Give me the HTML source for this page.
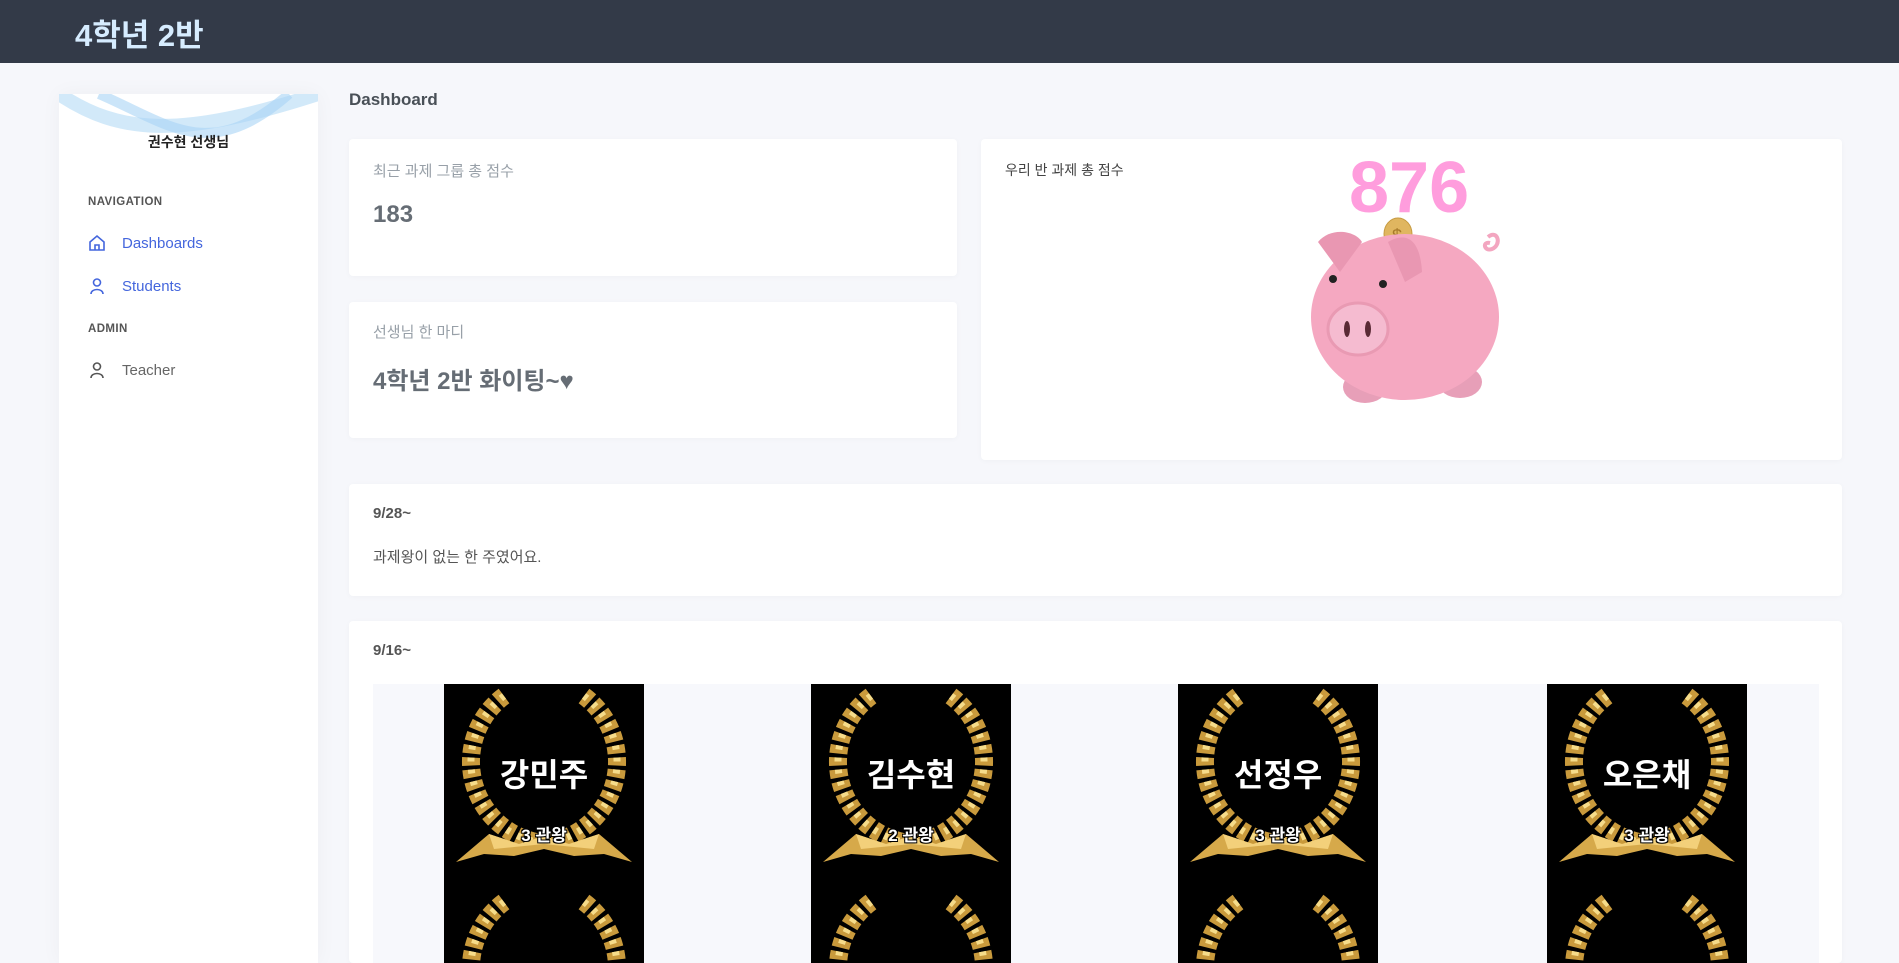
<!DOCTYPE html>
<html style="width:1899px;height:963px;overflow:hidden"><head><meta charset="utf-8">
<style>
*{box-sizing:border-box;margin:0;padding:0}
body{width:1899px;height:963px;overflow:hidden;background:#f6f7fb;font-family:"Liberation Sans","Noto Sans CJK KR",sans-serif;color:#495057;position:relative}
.hdr{position:absolute;left:0;top:0;width:1899px;height:63px;background:#333a48}
.hdr h1{position:absolute;left:75px;top:10px;font-size:31px;font-weight:bold;color:#d6ecff}
.side{position:absolute;left:59px;top:94px;width:259px;height:869px;background:#fff;box-shadow:0 0 20px rgba(0,0,0,.04)}
.wave{position:absolute;left:0;top:0;width:259px;height:50px}
.pname{position:absolute;left:0;width:259px;top:38px;text-align:center;font-size:14px;color:#222;font-weight:bold}
.sec{position:absolute;left:29px;font-size:11.5px;font-weight:bold;color:#555;letter-spacing:.4px}
.item{position:absolute;left:29px;font-size:15px;display:flex;align-items:center}
.item svg{margin-right:16px}
.title{position:absolute;left:349px;top:90px;font-size:17px;font-weight:bold;color:#495057}
.card{position:absolute;background:#fff;border-radius:4px;box-shadow:0 1px 6px rgba(0,0,0,.03);overflow:hidden}
.lbl{font-size:15px;color:#98a0a8}
.big{font-size:24px;font-weight:bold;color:#666d75}
.tile{position:absolute;width:200px;background:#000;top:684px;height:279px;overflow:hidden}
.w{position:absolute;left:0;width:200px;height:206px}
.w .n{position:absolute;left:0;width:200px;text-align:center;top:66px;font-size:32px;font-weight:bold;color:#fff}
.w .c{position:absolute;left:0;width:200px;text-align:center;top:137px;font-size:17px;font-weight:bold;color:#fff;text-shadow:-1px -1px 0 #000,1px 1px 0 #000,1px -1px 0 #000,-1px 1px 0 #000}
</style></head><body>
<div class="hdr"><h1>4학년 2반</h1></div>

<div class="side">
<svg class="wave" viewBox="0 0 259 50"><path d="M0 0 C60 40 120 45 259 0" fill="none" stroke="#bfe0f7" stroke-width="14" opacity=".7"/><path d="M40 0 C110 30 150 70 230 0" fill="none" stroke="#a9d3f5" stroke-width="10" opacity=".6"/></svg>
<div class="pname">권수현 선생님</div>
<div class="sec" style="top:102px">NAVIGATION</div>
<div class="item" style="top:140px;color:#4466dd"><svg width="18" height="18" viewBox="0 0 18 18" fill="none" stroke="#4466dd" stroke-width="1.6"><path d="M2 8 L9 2 L16 8 V16 H2Z"/><path d="M7 16 V11 H11 V16"/></svg>Dashboards</div>
<div class="item" style="top:183px;color:#4466dd"><svg width="18" height="18" viewBox="0 0 18 18" fill="none" stroke="#4466dd" stroke-width="1.6"><circle cx="9" cy="5.5" r="3.5"/><path d="M3 17 C3 11 15 11 15 17"/></svg>Students</div>
<div class="sec" style="top:229px">ADMIN</div>
<div class="item" style="top:267px;color:#666"><svg width="18" height="18" viewBox="0 0 18 18" fill="none" stroke="#555" stroke-width="1.6"><circle cx="9" cy="5.5" r="3.5"/><path d="M3 17 C3 11 15 11 15 17"/></svg>Teacher</div>
</div>

<div class="title">Dashboard</div>

<div class="card" style="left:349px;top:139px;width:608px;height:137px">
<div class="lbl" style="position:absolute;left:24px;top:21px">최근 과제 그룹 총 점수</div>
<div class="big" style="position:absolute;left:24px;top:62px">183</div></div>

<div class="card" style="left:349px;top:302px;width:608px;height:136px">
<div class="lbl" style="position:absolute;left:24px;top:19px">선생님 한 마디</div>
<div class="big" style="position:absolute;left:24px;top:59px">4학년 2반 화이팅~♥</div></div>

<div class="card" style="left:981px;top:139px;width:861px;height:321px">
<div style="position:absolute;left:24px;top:21px;font-size:14px;color:#444">우리 반 과제 총 점수</div>
<svg style="position:absolute;left:329px;top:73px" width="201" height="197" viewBox="0 0 201 197">
<ellipse cx="88" cy="22" rx="14" ry="16" fill="#e0b660" stroke="#c69a40"/>
<text x="82" y="30" font-size="18" fill="#a77a2a" font-family="Liberation Sans">$</text>
<path d="M178 25 c10 -8 14 8 4 12 c-8 3 -10 -8 -2 -6" fill="none" stroke="#f3a6c0" stroke-width="4"/>
<ellipse cx="55" cy="175" rx="22" ry="16" fill="#e79fb8"/>
<ellipse cx="150" cy="170" rx="22" ry="16" fill="#e79fb8"/>
<ellipse cx="95" cy="105" rx="94" ry="83" fill="#f5a8c1"/>
<path d="M8 30 C20 15 45 18 52 30 L30 60Z" fill="#e997b2"/>
<path d="M78 30 C95 20 110 25 112 60 L95 70Z" fill="#e997b2"/>
<circle cx="23" cy="67" r="4" fill="#222"/><circle cx="73" cy="72" r="4" fill="#222"/>
<ellipse cx="48" cy="117" rx="30" ry="26" fill="#f5bbd0" stroke="#e99ab3" stroke-width="3"/>
<ellipse cx="37" cy="117" rx="3" ry="8" fill="#5a2a35"/><ellipse cx="58" cy="117" rx="3" ry="8" fill="#5a2a35"/>
</svg>
<div style="position:absolute;left:368px;top:8px;font-size:72px;font-weight:bold;color:#ff9ddd;font-family:'Liberation Sans',sans-serif">876</div>
</div>

<div class="card" style="left:349px;top:484px;width:1493px;height:112px">
<div style="position:absolute;left:24px;top:21px;font-size:15px;font-weight:bold;color:#555">9/28~</div>
<div style="position:absolute;left:24px;top:62px;font-size:15px;color:#555">과제왕이 없는 한 주였어요.</div></div>

<div class="card" style="left:349px;top:621px;width:1493px;height:342px">
<div style="position:absolute;left:24px;top:21px;font-size:15px;font-weight:bold;color:#555">9/16~</div>
<div style="position:absolute;left:24px;top:63px;width:1446px;height:279px;background:#f7f8fc"></div></div>

<svg width="0" height="0" style="position:absolute"><defs><g id="wr">
<g fill="none"><path d="M60 12 A82 82 0 0 0 92 158" stroke="#c99a3c" stroke-width="18" stroke-dasharray="8 4"/><path d="M140 12 A82 82 0 0 1 108 158" stroke="#c99a3c" stroke-width="18" stroke-dasharray="8 4"/><path d="M60 12 A82 82 0 0 0 92 158" stroke="#f6dc8a" stroke-width="7" stroke-dasharray="4 8"/><path d="M140 12 A82 82 0 0 1 108 158" stroke="#f6dc8a" stroke-width="7" stroke-dasharray="4 8"/></g>
<path d="M12 178 L45 150 L75 160 L100 152 L125 160 L155 150 L188 178 L160 170 L130 172 L100 165 L70 172 L40 170Z" fill="#d6a94a"/>
<path d="M45 150 L75 160 L100 152 L125 160 L155 150 L150 165 L100 160 L50 165Z" fill="#f3d07a"/></g></defs></svg>

<div class="tile" style="left:444px"><div class="w" style="top:0"><svg width="200" height="200"><use href="#wr"/></svg><div class="n">강민주</div><div class="c">3 관왕</div></div><div class="w" style="top:206px"><svg width="200" height="200"><use href="#wr"/></svg><div class="n">오예나</div></div></div>
<div class="tile" style="left:811px"><div class="w" style="top:0"><svg width="200" height="200"><use href="#wr"/></svg><div class="n">김수현</div><div class="c">2 관왕</div></div><div class="w" style="top:206px"><svg width="200" height="200"><use href="#wr"/></svg><div class="n">오다인</div></div></div>
<div class="tile" style="left:1178px"><div class="w" style="top:0"><svg width="200" height="200"><use href="#wr"/></svg><div class="n">선정우</div><div class="c">3 관왕</div></div><div class="w" style="top:206px"><svg width="200" height="200"><use href="#wr"/></svg><div class="n">이지민</div></div></div>
<div class="tile" style="left:1547px"><div class="w" style="top:0"><svg width="200" height="200"><use href="#wr"/></svg><div class="n">오은채</div><div class="c">3 관왕</div></div><div class="w" style="top:206px"><svg width="200" height="200"><use href="#wr"/></svg><div class="n">이하린</div></div></div>
</body></html>
